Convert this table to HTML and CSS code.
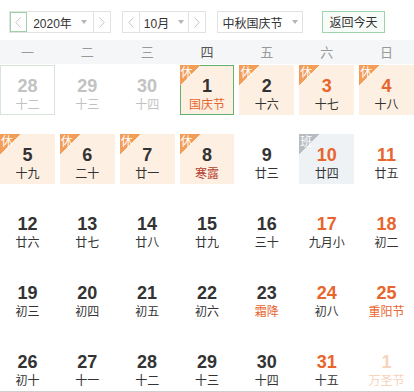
FILE: index.html
```html
<!DOCTYPE html>
<html lang="zh">
<head>
<meta charset="utf-8">
<title>万年历</title>
<link rel="stylesheet" href="styles.css">
</head>
<body>
<div class="topbar">
  <div class="group year">
    <span class="arrow hover"><svg width="6" height="11" viewBox="0 0 6 11"><polyline points="5.5,0.5 0.8,5.5 5.5,10.5" fill="none" stroke="#c4c4c4" stroke-width="1"/></svg></span>
    <span class="sel">2020年<i class="caret"></i></span>
    <span class="arrow"><svg width="6" height="11" viewBox="0 0 6 11"><polyline points="0.5,0.5 5.2,5.5 0.5,10.5" fill="none" stroke="#c4c4c4" stroke-width="1"/></svg></span>
  </div>
  <div class="group month">
    <span class="arrow"><svg width="6" height="11" viewBox="0 0 6 11"><polyline points="5.5,0.5 0.8,5.5 5.5,10.5" fill="none" stroke="#c4c4c4" stroke-width="1"/></svg></span>
    <span class="sel">10月<i class="caret"></i></span>
    <span class="arrow"><svg width="6" height="11" viewBox="0 0 6 11"><polyline points="0.5,0.5 5.2,5.5 0.5,10.5" fill="none" stroke="#c4c4c4" stroke-width="1"/></svg></span>
  </div>
  <div class="group holiday"><span class="sel">中秋国庆节<i class="caret"></i></span></div>
  <div class="today-btn">返回今天</div>
</div>

<div class="weekhead">
  <span>一</span><span>二</span><span>三</span><span class="cur">四</span><span>五</span><span>六</span><span>日</span>
</div>

<div class="days">
  <div class="day other hover"><b>28</b><em>十二</em></div>
  <div class="day other"><b>29</b><em>十三</em></div>
  <div class="day other"><b>30</b><em>十四</em></div>
  <div class="day rest selected"><i class="tag">休</i><b>1</b><em class="fest">国庆节</em></div>
  <div class="day rest"><i class="tag">休</i><b>2</b><em>十六</em></div>
  <div class="day rest wk"><i class="tag">休</i><b>3</b><em>十七</em></div>
  <div class="day rest wk"><i class="tag">休</i><b>4</b><em>十八</em></div>

  <div class="day rest"><i class="tag">休</i><b>5</b><em>十九</em></div>
  <div class="day rest"><i class="tag">休</i><b>6</b><em>二十</em></div>
  <div class="day rest"><i class="tag">休</i><b>7</b><em>廿一</em></div>
  <div class="day rest"><i class="tag">休</i><b>8</b><em class="term">寒露</em></div>
  <div class="day"><b>9</b><em>廿三</em></div>
  <div class="day work wk"><i class="tag">班</i><b>10</b><em>廿四</em></div>
  <div class="day wk"><b>11</b><em>廿五</em></div>

  <div class="day"><b>12</b><em>廿六</em></div>
  <div class="day"><b>13</b><em>廿七</em></div>
  <div class="day"><b>14</b><em>廿八</em></div>
  <div class="day"><b>15</b><em>廿九</em></div>
  <div class="day"><b>16</b><em>三十</em></div>
  <div class="day wk"><b>17</b><em>九月小</em></div>
  <div class="day wk"><b>18</b><em>初二</em></div>

  <div class="day"><b>19</b><em>初三</em></div>
  <div class="day"><b>20</b><em>初四</em></div>
  <div class="day"><b>21</b><em>初五</em></div>
  <div class="day"><b>22</b><em>初六</em></div>
  <div class="day"><b>23</b><em class="fest">霜降</em></div>
  <div class="day wk"><b>24</b><em>初八</em></div>
  <div class="day wk"><b>25</b><em class="fest">重阳节</em></div>

  <div class="day"><b>26</b><em>初十</em></div>
  <div class="day"><b>27</b><em>十一</em></div>
  <div class="day"><b>28</b><em>十二</em></div>
  <div class="day"><b>29</b><em>十三</em></div>
  <div class="day"><b>30</b><em>十四</em></div>
  <div class="day wk"><b>31</b><em>十五</em></div>
  <div class="day next"><b>1</b><em>万圣节</em></div>
</div>
<div class="bottomline"></div>
</body>
</html>
```

FILE: styles.css
```css
* { box-sizing: border-box; }
body {
  margin: 0;
  background: #fff;
  font-family: "Liberation Sans", Arial, "Noto Sans CJK SC", sans-serif;
  color: #333;
  width: 414px;
  overflow: hidden;
}
.topbar {
  display: flex;
  align-items: center;
  padding: 11px 0 0 9px;
  height: 33px;
}
.group {
  display: flex;
  height: 22px;
  border: 1px solid #e2e2e2;
  background: #fff;
}
.year { width: 102px; }
.month { width: 84px; margin-left: 11px; }
.holiday { width: 86px; margin-left: 11px; }
.arrow {
  width: 17px;
  display: flex;
  align-items: center;
  justify-content: center;
  flex: none;
}
.arrow:first-child { border-right: 1px solid #e2e2e2; }
.arrow:last-child { border-left: 1px solid #e2e2e2; }
.arrow.hover { outline: 1px solid #9fd0a8; outline-offset: -1px; }
.sel {
  flex: 1;
  display: flex;
  align-items: center;
  justify-content: center;
  font-size: 12px;
  color: #333;
  font-family: "Liberation Sans", "Noto Sans CJK SC", sans-serif;
  gap: 9px;
}
.caret {
  width: 0;
  height: 0;
  border-left: 3.5px solid transparent;
  border-right: 3.5px solid transparent;
  border-top: 4px solid #b5b5b5;
}
.today-btn {
  margin-left: 19px;
  width: 63px;
  height: 22px;
  border: 1px solid #9dd4ac;
  background: #f7fcf8;
  font-size: 12px;
  line-height: 20px;
  text-align: center;
  color: #333;
  font-family: "Noto Sans CJK SC", sans-serif;
}
.weekhead {
  margin-top: 7px;
  height: 24px;
  background: #f4f6f8;
  display: grid;
  grid-template-columns: repeat(7, 1fr);
  column-gap: 5px;
  font-size: 13px;
  line-height: 24px;
  color: #999;
  text-align: center;
  font-family: "Noto Sans CJK SC", sans-serif;
}
.weekhead .cur { color: #555; }
.days {
  margin-top: 1px;
  display: grid;
  grid-template-columns: repeat(7, 1fr);
  column-gap: 5px;
  row-gap: 19px;
}
.day {
  position: relative;
  height: 50px;
  text-align: center;
  padding-top: 10px;
  border: 1px solid transparent;
}
.day b {
  display: block;
  font-size: 18px;
  line-height: 20px;
  font-weight: bold;
  color: #333;
}
.day em {
  display: block;
  font-style: normal;
  font-size: 12px;
  line-height: 16px;
  color: #333;
  font-family: "Noto Sans CJK SC", sans-serif;
}
.day.wk b { color: #e8652d; }
.day.other b, .day.other em { color: #c2c2c2; }
.day.hover { border-color: #d7e4d8; }
.day.rest { background: #fdf0e3; }
.day.work { background: #eff2f5; }
.day.selected { border-color: #63b16e; }
.day.next b, .day.next em { color: #f6d4bd; }
.day em.fest { color: #e8652d; }
.day em.term { color: #b5412f; }
.tag {
  position: absolute;
  left: -1px;
  top: -1px;
  width: 21px;
  height: 20px;
  background: linear-gradient(to bottom right, #f29d58 50%, transparent 50%);
  color: #fff;
  font-style: normal;
  font-size: 12px;
  line-height: 13px;
  text-align: left;
  padding-left: 1px;
  font-family: "Noto Sans CJK SC", sans-serif;
}
.work .tag { background: linear-gradient(to bottom right, #b7bcc3 50%, transparent 50%); }
.bottomline {
  height: 1px;
  background: #cfcfcf;
}
```
